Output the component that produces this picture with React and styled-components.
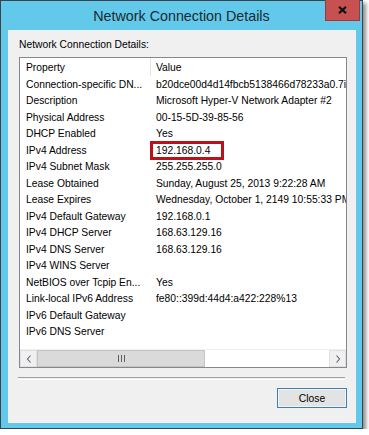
import React from 'react'
import styled, {createGlobalStyle} from 'styled-components'

const GlobalStyle = createGlobalStyle`
  body {
    margin: 0;
    background: #ffffff;
    font-family: 'Liberation Sans', Arial, sans-serif;
  }
`
const Window = styled.div`
  width: 361px;
  height: 427px;
  border: 1px solid #3a4449;
  background-color: #62c9ea;
  box-shadow: 3px 3px 4px rgba(0, 0, 0, 0.45);
  display: flex;
  flex-direction: column;
`
const TitleBar = styled.div`
  height: 29px;
  display: grid;
  grid-template-columns: 1fr auto 1fr;
  align-items: start;
`
const Title = styled.div`
  grid-column: 2;
  align-self: center;
  font-size: 14.3px;
  color: #1b2a30;
  padding-top: 1px;
`
const CloseBox = styled.div`
  grid-column: 3;
  justify-self: end;
  margin-right: 2px;
  margin-top: -1px;
  width: 33px;
  height: 20px;
  background-color: #c75050;
  border: 1px solid #9a3a34;
  border-top: none;
  display: flex;
  align-items: center;
  justify-content: center;
`
const Client = styled.div`
  flex: 1;
  margin: 0 6px 5px 7px;
  background-color: #f0f0f0;
  padding: 8px 9px 0 11px;
  display: flex;
  flex-direction: column;
`
const Label = styled.div`
  font-size: 10.3px;
  line-height: 14px;
  color: #000;
  margin-bottom: 5px;
`
const ListBox = styled.div`
  height: 309px;
  border: 1px solid #828790;
  background-color: #ffffff;
  display: flex;
  flex-direction: column;
`
const Row = styled.div`
  display: grid;
  grid-template-columns: 131px 1fr;
  height: ${(props) => props.header ? '18px' : '16.5px'};
  align-items: center;
  font-size: 10.3px;
  color: #000;
  white-space: nowrap;
`
const Cell = styled.div`
  position: relative;
  height: 100%;
  display: flex;
  align-items: center;
  padding-left: ${(props) => props.value ? '5px' : '6px'};
  overflow: ${(props) => props.marked ? 'visible' : 'hidden'};
  border-right: ${(props) => props.header ? '1px solid #e5e5e5' : 'none'};
`
const Rows = styled.div`
  flex: 1;
  overflow: hidden;
`
const Mark = styled.div`
  position: absolute;
  left: -1px;
  top: -1px;
  width: 68px;
  height: 13px;
  border: 3px solid #b8131b;
`
const ScrollBar = styled.div`
  height: 17px;
  display: flex;
  background-color: #ffffff;
  border-top: 1px solid #f0f0f0;
`
const Arrow = styled.div`
  width: 17px;
  display: flex;
  align-items: center;
  justify-content: center;
  background-color: #f0f0f0;
  border: 1px solid #e0e0e0;
  box-sizing: border-box;
`
const Track = styled.div`
  flex: 1;
  display: flex;
  background-color: #ffffff;
`
const Thumb = styled.div`
  width: 168px;
  background-color: #dadada;
  border: 1px solid #c4c4c4;
  box-sizing: border-box;
  display: flex;
  align-items: center;
  justify-content: center;
  gap: 2px;
`
const Grip = styled.span`
  width: 1px;
  height: 7px;
  background-color: #606060;
`
const Separator = styled.div`
  margin: 9px 2px 0 -1px;
  height: 1px;
  border-top: 1px solid #a0a0a0;
  border-bottom: 1px solid #ffffff;
`
const Footer = styled.div`
  display: flex;
  justify-content: flex-end;
  margin-top: 8px;
`
const Button = styled.div`
  width: 68px;
  height: 18px;
  border: 1px solid #3c7fb1;
  background-color: #e3e3e3;
  box-shadow: inset 0 0 0 1px #f4f4f4;
  font-size: 10.3px;
  display: flex;
  align-items: center;
  justify-content: center;
  color: #000;
`

const details = [
  ['Connection-specific DN...', 'b20dce00d4d14fbcb5138466d78233a0.7internal'],
  ['Description', 'Microsoft Hyper-V Network Adapter #2'],
  ['Physical Address', '00-15-5D-39-85-56'],
  ['DHCP Enabled', 'Yes'],
  ['IPv4 Address', '192.168.0.4', true],
  ['IPv4 Subnet Mask', '255.255.255.0'],
  ['Lease Obtained', 'Sunday, August 25, 2013 9:22:28 AM'],
  ['Lease Expires', 'Wednesday, October 1, 2149 10:55:33 PM'],
  ['IPv4 Default Gateway', '192.168.0.1'],
  ['IPv4 DHCP Server', '168.63.129.16'],
  ['IPv4 DNS Server', '168.63.129.16'],
  ['IPv4 WINS Server', ''],
  ['NetBIOS over Tcpip En...', 'Yes'],
  ['Link-local IPv6 Address', 'fe80::399d:44d4:a422:228%13'],
  ['IPv6 Default Gateway', ''],
  ['IPv6 DNS Server', ''],
]

const Chevron = ({left}) => (
  <svg width="6" height="8" viewBox="0 0 6 8">
    <path d={left ? 'M4.5 0.5 L1.5 4 L4.5 7.5' : 'M1.5 0.5 L4.5 4 L1.5 7.5'} fill="none" stroke="#606060" strokeWidth="1.1"/>
  </svg>
)

export default function App(){
  return (
    <>
      <GlobalStyle/>
      <Window>
        <TitleBar>
          <Title>Network Connection Details</Title>
          <CloseBox>
            <svg width="9" height="8" viewBox="0 0 9 8">
              <path d="M1 0.8 L8 7.2 M8 0.8 L1 7.2" stroke="#111" strokeWidth="2.2"/>
            </svg>
          </CloseBox>
        </TitleBar>
        <Client>
          <Label>Network Connection Details:</Label>
          <ListBox>
            <Row header>
              <Cell header>Property</Cell>
              <Cell value>Value</Cell>
            </Row>
            <Rows>
              {details.map(([name, value, marked]) => (
                <Row key={name}>
                  <Cell>{name}</Cell>
                  <Cell value marked={marked}>
                    {value}
                    {marked && <Mark/>}
                  </Cell>
                </Row>
              ))}
            </Rows>
            <ScrollBar>
              <Arrow><Chevron left/></Arrow>
              <Track>
                <Thumb><Grip/><Grip/><Grip/></Thumb>
              </Track>
              <Arrow><Chevron/></Arrow>
            </ScrollBar>
          </ListBox>
          <Separator/>
          <Footer>
            <Button>Close</Button>
          </Footer>
        </Client>
      </Window>
    </>
  )
}
